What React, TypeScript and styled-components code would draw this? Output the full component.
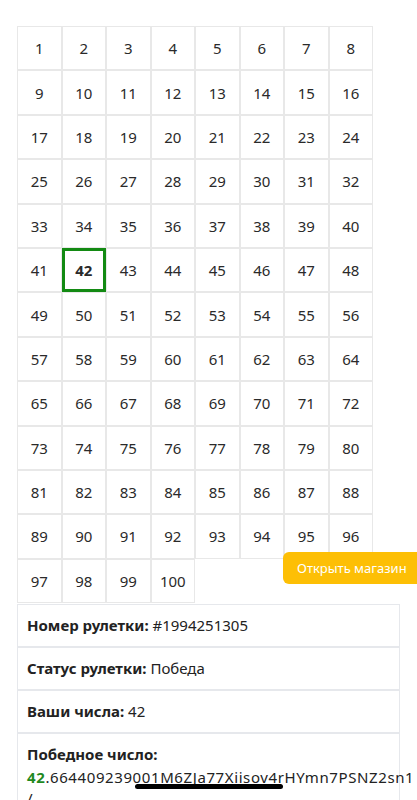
import React from "react";
import styled, { createGlobalStyle } from "styled-components";

const Global = createGlobalStyle`
  html, body { margin: 0; padding: 0; background: #fff; overflow: hidden; }
  body { font-family: "Noto Sans", "Open Sans", sans-serif; color: #222; }
  * { box-sizing: border-box; }
`;

const Page = styled.div`
  position: relative;
  width: 417px;
  height: 800px;
  overflow: hidden;
  padding: 26px 17px 0 17px;
`;

const Grid = styled.div`
  display: grid;
  grid-template-columns: repeat(8, 44.5px);
  grid-auto-rows: 44.4px;
  width: 356px;
`;

const Cell = styled.div<{ $active?: boolean }>`
  display: flex;
  align-items: center;
  justify-content: center;
  border: ${(p) => (p.$active ? "3px solid #138a13" : "1px solid #e8e8e8")};
  font-size: 15px;
  font-weight: ${(p) => (p.$active ? 700 : 400)};
  color: #2a2a2a;
`;

const Info = styled.div`
  display: flex;
  flex-direction: column;
  width: 383px;
  margin-top: 1px;
`;

const Row = styled.div`
  border: 1px solid #e6e8ec;
  padding: 10px 9px;
  font-size: 15px;
  line-height: 21px;
  color: #222;
`;

const Label = styled.b`
  font-weight: 700;
`;

const Hash = styled.div`
  white-space: nowrap;
  letter-spacing: 0.6px;
  margin-top: 2px;
`;

const Win = styled.span`
  color: #1f8a1f;
  font-weight: 700;
`;

const ShopButton = styled.div`
  position: absolute;
  left: 283px;
  top: 552px;
  width: 140px;
  height: 32px;
  background: #fdbf05;
  border-radius: 6px 0 0 6px;
  color: #fff;
  font-size: 13px;
  display: flex;
  align-items: center;
  padding-left: 14px;
`;

const HomeBar = styled.div`
  position: absolute;
  left: 135px;
  top: 784px;
  width: 148px;
  height: 5px;
  border-radius: 3px;
  background: #000;
`;

export default function App() {
  const nums = Array.from({ length: 100 }, (_, i) => i + 1);
  return (
    <Page>
      <Global />
      <Grid>
        {nums.map((n) => (
          <Cell key={n} $active={n === 42}>
            {n}
          </Cell>
        ))}
      </Grid>
      <Info>
        <Row>
          <Label>Номер рулетки:</Label> #1994251305
        </Row>
        <Row>
          <Label>Статус рулетки:</Label> Победа
        </Row>
        <Row>
          <Label>Ваши числа:</Label> 42
        </Row>
        <Row>
          <Label>Победное число:</Label>
          <Hash>
            <Win>42</Win>.664409239001M6ZJa77Xiisov4rHYmn7PSNZ2sn1
          </Hash>
          <div>/</div>
        </Row>
      </Info>
      <ShopButton>Открыть магазин</ShopButton>
      <HomeBar />
    </Page>
  );
}
